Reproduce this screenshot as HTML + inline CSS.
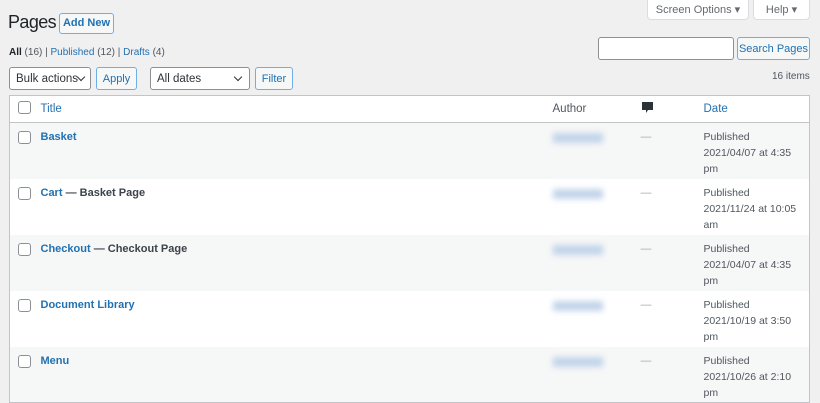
<!DOCTYPE html>
<html><head><style>
*{box-sizing:border-box;margin:0;padding:0}
body{width:820px;height:400px;overflow:hidden;background:#f0f0f1;font-family:"Liberation Sans",sans-serif;font-size:11px;color:#3c434a;position:relative}
a{color:#2271b1;text-decoration:none}
.abs{position:absolute}
h1{position:absolute;left:8px;top:12px;font-size:18px;font-weight:400;color:#1d2327;letter-spacing:-0.6px}
.btn{position:absolute;border:1px solid #2271b1;color:#2271b1;background:#f6f7f7;border-radius:3px;font-size:11px;text-align:center}
.sel{position:absolute;border:1px solid #8c8f94;background:#fff;border-radius:3px;font-size:11.5px;color:#2c3338;padding:5px 0 0 6px}
.chev{position:absolute;right:8px;top:6px;width:6px;height:6px;border-right:1.5px solid #2c3338;border-bottom:1.5px solid #2c3338;transform:rotate(45deg)}
.tab{position:absolute;top:0;height:20px;background:#fff;border:1px solid #dcdcde;border-top:none;border-radius:0 0 4px 4px;color:#646970;font-size:11px;text-align:center;padding-top:3px}
table{position:absolute;left:9px;top:95px;width:801px;border-collapse:collapse;border:1px solid #c3c4c7;background:#fff}
td{vertical-align:top;font-size:11px}
tr.h td{height:27px;border-bottom:1px solid #c3c4c7;vertical-align:middle;font-size:11.5px}
tr.r td{height:56px;padding-top:8px}
tr.r:nth-child(even) td{background:#f6f7f7}
.cb{display:inline-block;width:13px;height:13px;border:1px solid #8c8f94;border-radius:3px;background:#fff;margin-left:8px}
.t{color:#2271b1;font-weight:700}
.blur{display:inline-block;width:50px;height:10px;background:#c3d5ea;filter:blur(3px);margin-top:2px}
.date{line-height:16px;color:#50575e;font-size:10.5px;padding-top:6px!important}
</style></head><body>
<h1>Pages</h1>
<div class="btn" style="left:59px;top:13px;width:55px;height:21px;padding-top:3px;font-weight:600;border-color:#72aee6;background:#f6f7f7">Add New</div>
<div class="tab" style="left:647px;width:102px">Screen Options ▾</div>
<div class="tab" style="left:753px;width:57px">Help ▾</div>
<div class="abs" style="left:9px;top:47px;font-size:10px;color:#50575e"><b style="color:#1d2327">All</b> (16) | <a>Published</a> (12) | <a>Drafts</a> (4)</div>
<div class="abs" style="left:598px;top:37px;width:136px;height:23px;background:#fff;border:1px solid #8c8f94;border-radius:3px"></div>
<div class="btn" style="left:737px;top:37px;width:73px;height:23px;padding-top:5px;border-color:#72aee6">Search Pages</div>
<div class="sel" style="left:9px;top:67px;width:82px;height:23px">Bulk actions<div class="chev" style="right:6px"></div></div>
<div class="btn" style="left:96px;top:67px;width:41px;height:23px;padding-top:5px;border-color:#72aee6">Apply</div>
<div class="sel" style="left:150px;top:67px;width:100px;height:23px">All dates<div class="chev"></div></div>
<div class="btn" style="left:255px;top:67px;width:38px;height:23px;padding-top:5px;border-color:#72aee6">Filter</div>
<div class="abs" style="left:772px;top:71px;font-size:10px;color:#50575e">16 items</div>
<table>
<tr class="h"><td style="width:31px"><span class="cb"></span></td><td style="width:512px"><a>Title</a></td><td style="width:88px;color:#50575e">Author</td><td style="width:63px"><svg width="11" height="12" viewBox="0 0 11 12" style="margin-left:1px"><path d="M0 0h11v8H6l-2 3V8H0z" fill="#2c3338"/></svg></td><td><a>Date</a></td></tr>
<tr class="r"><td><span class="cb"></span></td><td><a class="t">Basket</a></td><td><span class="blur"></span></td><td style="color:#a7aaad">—</td><td class="date">Published<br>2021/04/07 at 4:35<br>pm</td></tr>
<tr class="r"><td><span class="cb"></span></td><td><a class="t">Cart</a> <span style="font-weight:600;color:#3c434a">— Basket Page</span></td><td><span class="blur"></span></td><td style="color:#a7aaad">—</td><td class="date">Published<br>2021/11/24 at 10:05<br>am</td></tr>
<tr class="r"><td><span class="cb"></span></td><td><a class="t">Checkout</a> <span style="font-weight:600;color:#3c434a">— Checkout Page</span></td><td><span class="blur"></span></td><td style="color:#a7aaad">—</td><td class="date">Published<br>2021/04/07 at 4:35<br>pm</td></tr>
<tr class="r"><td><span class="cb"></span></td><td><a class="t">Document Library</a></td><td><span class="blur"></span></td><td style="color:#a7aaad">—</td><td class="date">Published<br>2021/10/19 at 3:50<br>pm</td></tr>
<tr class="r"><td><span class="cb"></span></td><td><a class="t">Menu</a></td><td><span class="blur"></span></td><td style="color:#a7aaad">—</td><td class="date">Published<br>2021/10/26 at 2:10<br>pm</td></tr>
</table>
</body></html>
